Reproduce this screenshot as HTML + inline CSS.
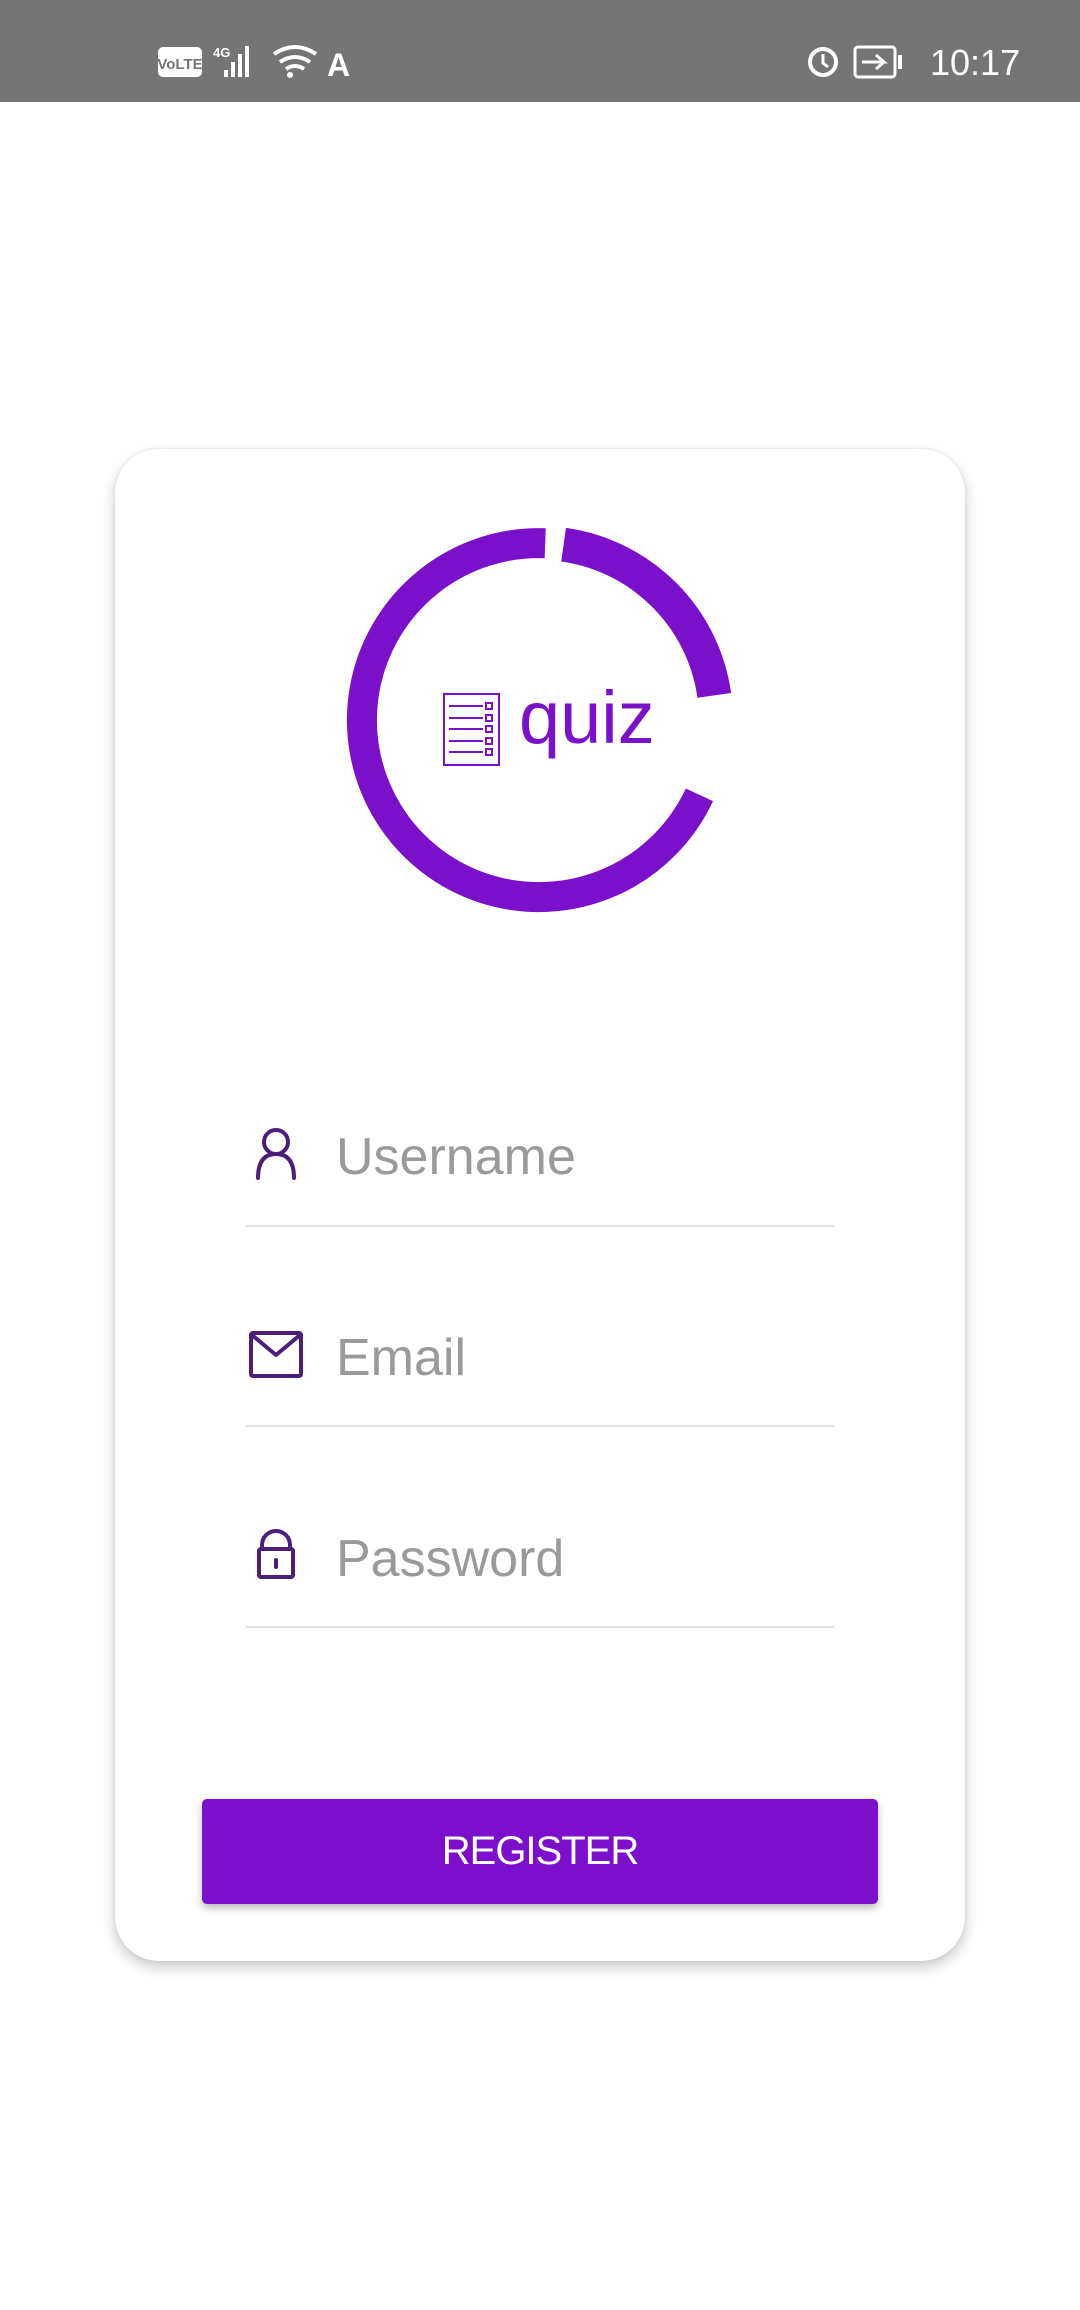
<!DOCTYPE html>
<html><head><meta charset="utf-8"><style>
*{margin:0;padding:0;box-sizing:border-box}
body{width:1080px;height:2310px;background:#fff;position:relative;overflow:hidden;font-family:"Liberation Sans",sans-serif}
.sb{position:absolute;left:0;top:0;width:1080px;height:102px;background:#757575}
.card{position:absolute;left:115px;top:449px;width:850px;height:1512px;background:#fff;border-radius:44px;box-shadow:0 6px 14px rgba(0,0,0,0.22),0 0 3px rgba(0,0,0,0.08)}
.lbl{position:absolute;left:336px;font-size:52px;line-height:1;color:#9a9a9a;white-space:nowrap}
.ln{position:absolute;left:246px;width:588px;height:2px;background:#e2e2e2}
.btn{position:absolute;left:202px;top:1799px;width:676px;height:105px;background:#7b0fcb;border-radius:5px;box-shadow:0 4px 8px rgba(0,0,0,0.28);color:#fff;font-size:40px;text-align:center;line-height:105px;letter-spacing:-1px}
</style></head><body>
<div class="sb">
<svg width="1080" height="102" style="position:absolute;left:0;top:0">
<rect x="158" y="47" width="44" height="30" rx="5" fill="#fff"/>
<text x="180" y="69" font-size="15" font-weight="bold" fill="#757575" text-anchor="middle" font-family="Liberation Sans Narrow,Liberation Sans">VoLTE</text>
<text x="213" y="57" font-size="13" font-weight="bold" fill="#fff">4G</text>
<rect x="224" y="70" width="4" height="7" fill="#fff"/><rect x="231" y="62" width="4" height="15" fill="#fff"/><rect x="238" y="54" width="4" height="23" fill="#fff"/><rect x="245" y="46" width="4" height="31" fill="#fff"/>
<path d="M274 54 Q295 40 316 54 M280 62 Q295 52 310 62 M286 69 Q295 63 304 69" stroke="#fff" stroke-width="4" fill="none"/>
<circle cx="290" cy="75" r="3" fill="#fff"/>
<text x="327" y="76" font-size="32" font-weight="bold" fill="#fff">A</text>
<circle cx="823" cy="62" r="13" stroke="#fff" stroke-width="4" fill="none"/>
<path d="M823 54v9l5 4" stroke="#fff" stroke-width="3" fill="none"/>
<rect x="855" y="47" width="40" height="30" rx="3" stroke="#fff" stroke-width="3" fill="none"/>
<rect x="898" y="55" width="4" height="14" fill="#fff"/>
<path d="M862 62h22l-8-7M884 62l-8 7" stroke="#fff" stroke-width="3" fill="none"/>
<text x="930" y="75" font-size="36" fill="#fff">10:17</text>
</svg>
</div>
<div class="card"></div>
<svg width="1080" height="2310" style="position:absolute;left:0;top:0">
<g fill="none" stroke="#7a10c9" stroke-linecap="butt">
<path d="M563.6 544.7 A177 177 0 0 1 714.3 695.4" stroke-width="34"/>
<path d="M699.4 794.8 A177 177 0 1 1 545.2 543.2" stroke-width="30"/>
</g>
<g stroke="#7a10c9" fill="none" stroke-width="2">
<rect x="444" y="694" width="55" height="71"/>
<path d="M449 706h34M449 718h34M449 729h34M449 741h34M449 752h34"/>
<rect x="486" y="703" width="6" height="6"/><rect x="486" y="715" width="6" height="6"/><rect x="486" y="726" width="6" height="6"/><rect x="486" y="738" width="6" height="6"/><rect x="486" y="749" width="6" height="6"/>
</g>
<text x="519" y="743" font-size="74" fill="#7a10c9" font-family="Liberation Sans">quiz</text>
<g stroke="#4a1f7a" stroke-width="4" fill="none" stroke-linecap="round" stroke-linejoin="round">
<circle cx="276" cy="1142" r="12"/>
<path d="M258 1178 Q258 1154 276 1154 Q294 1154 294 1178"/>
<rect x="251" y="1333" width="50" height="43" rx="2"/>
<path d="M252 1335 L276 1355 L300 1335"/>
<path d="M262 1549 V1545 A14 14 0 0 1 290 1545 V1549"/>
<rect x="259" y="1549" width="34" height="28" rx="2"/>
<path d="M276 1560 v7"/>
</g>
</svg>
<div class="lbl" style="top:1131px">Username</div>
<div class="ln" style="top:1225px"></div>
<div class="lbl" style="top:1332px">Email</div>
<div class="ln" style="top:1425px"></div>
<div class="lbl" style="top:1533px">Password</div>
<div class="ln" style="top:1626px"></div>
<div class="btn">REGISTER</div>
</body></html>
